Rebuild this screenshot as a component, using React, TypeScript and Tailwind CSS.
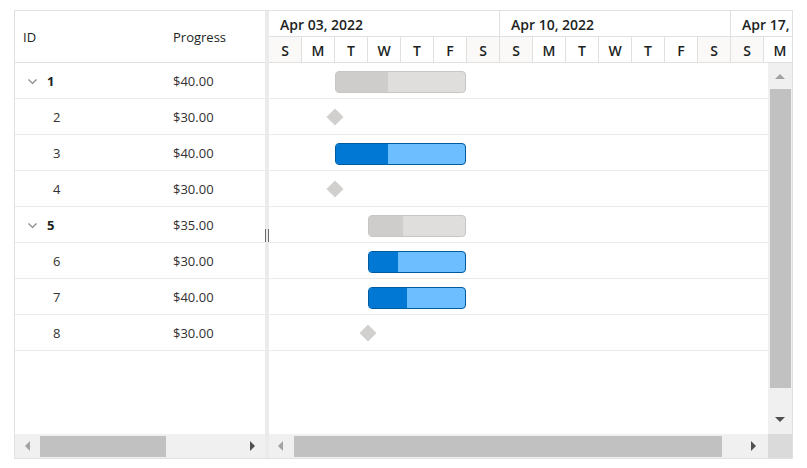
import React from "react";

type Row = {
  id: number;
  progress: string;
  parent?: boolean;
  kind: "parent" | "task" | "milestone";
  start: number; // day index from Apr 03
  days?: number;
  pct?: number;
};

const rows: Row[] = [
  { id: 1, progress: "$40.00", parent: true, kind: "parent", start: 2, days: 4, pct: 40 },
  { id: 2, progress: "$30.00", kind: "milestone", start: 2 },
  { id: 3, progress: "$40.00", kind: "task", start: 2, days: 4, pct: 40 },
  { id: 4, progress: "$30.00", kind: "milestone", start: 2 },
  { id: 5, progress: "$35.00", parent: true, kind: "parent", start: 3, days: 3, pct: 35 },
  { id: 6, progress: "$30.00", kind: "task", start: 3, days: 3, pct: 30 },
  { id: 7, progress: "$40.00", kind: "task", start: 3, days: 3, pct: 40 },
  { id: 8, progress: "$30.00", kind: "milestone", start: 3 },
];

const DAY = 33;
const weeks = ["Apr 03, 2022", "Apr 10, 2022", "Apr 17, 2022"];
const dayLetters = ["S", "M", "T", "W", "T", "F", "S"];

const ArrowLeft = ({ dark }: { dark?: boolean }) => (
  <svg width="6" height="10" viewBox="0 0 6 10">
    <polygon points="5,0 5,10 0,5" fill={dark ? "#505050" : "#a3a3a3"} />
  </svg>
);
const ArrowRight = ({ dark }: { dark?: boolean }) => (
  <svg width="6" height="10" viewBox="0 0 6 10">
    <polygon points="0,0 0,10 5,5" fill={dark ? "#505050" : "#a3a3a3"} />
  </svg>
);
const ArrowUp = ({ dark }: { dark?: boolean }) => (
  <svg width="10" height="6" viewBox="0 0 10 6">
    <polygon points="0,5 10,5 5,0" fill={dark ? "#505050" : "#a3a3a3"} />
  </svg>
);
const ArrowDown = ({ dark }: { dark?: boolean }) => (
  <svg width="10" height="6" viewBox="0 0 10 6">
    <polygon points="0,0 10,0 5,5" fill={dark ? "#505050" : "#a3a3a3"} />
  </svg>
);

const Chevron = () => (
  <svg width="9" height="6" viewBox="0 0 9 6" className="mr-[10px]">
    <polyline points="0.5,0.5 4.5,4.5 8.5,0.5" fill="none" stroke="#8a8886" strokeWidth="1.2" />
  </svg>
);

const Bar = ({ row }: { row: Row }) => {
  if (row.kind === "milestone") {
    return (
      <div
        className="mt-[12px] h-[12px] w-[12px] rotate-45 bg-[#d2d0ce]"
        style={{ marginLeft: row.start * DAY - 6 }}
      />
    );
  }
  const width = (row.days ?? 0) * DAY - 1;
  const isParent = row.kind === "parent";
  return (
    <div
      className={
        "mt-[8px] h-[22px] overflow-hidden rounded-[4px] border " +
        (isParent ? "border-[#c8c6c4] bg-[#dfdedd]" : "border-[#005a9e] bg-[#6cbeff]")
      }
      style={{ marginLeft: row.start * DAY, width }}
    >
      <div
        className={"h-full " + (isParent ? "bg-[#cecdcc]" : "bg-[#0078d4]")}
        style={{ width: `${row.pct}%` }}
      />
    </div>
  );
};

export default function App() {
  return (
    <div
      className="pl-[14px] pt-[10px] text-[#323130]"
      style={{ fontFamily: '"Open Sans", "Noto Sans", sans-serif' }}
    >
      <div className="flex h-[449px] w-[779px] border border-[#e0e0e0] bg-white">
        {/* Left grid */}
        <div className="flex w-[250px] flex-col">
          <div className="flex h-[52px] items-center border-b border-[#e0e0e0] pt-[2px] text-[13px] text-[#201f1e]">
            <div className="w-[158px] pl-[8px]">ID</div>
            <div>Progress</div>
          </div>
          <div className="flex-1 overflow-hidden">
            {rows.map((r) => (
              <div key={r.id} className="flex h-[36px] items-center border-b border-[#e9e9e9] pt-[3px] text-[13px]">
                <div className="flex w-[158px] items-center">
                  {r.parent ? (
                    <div className="flex items-center pl-[13px]">
                      <Chevron />
                      <span className="font-bold text-[#201f1e]">{r.id}</span>
                    </div>
                  ) : (
                    <span className="pl-[38px]">{r.id}</span>
                  )}
                </div>
                <div>{r.progress}</div>
              </div>
            ))}
          </div>
          <div className="flex h-[24px] items-center bg-[#f0f0f0] pl-[10px] pr-[9px]">
            <ArrowLeft />
            <div className="ml-[9px] h-[21px] w-[126px] bg-[#c1c1c1]" />
            <div className="flex-1" />
            <ArrowRight dark />
          </div>
        </div>

        {/* Splitter */}
        <div className="relative w-[4px] bg-[#ebebeb]">
          <div className="absolute left-0 top-[218px] flex h-[13px] w-[4px] justify-between">
            <div className="w-[1px] bg-[#6b6b6b]" />
            <div className="w-[1px] bg-[#6b6b6b]" />
          </div>
        </div>

        {/* Chart */}
        <div className="flex min-w-0 flex-1 flex-col">
          <div className="h-[52px] overflow-hidden border-b border-[#e0e0e0]">
            <div className="flex h-[26px] w-[693px] border-b border-[#e0e0e0]">
              {weeks.map((w) => (
                <div
                  key={w}
                  className="flex w-[231px] shrink-0 items-center border-r border-[#e0e0e0] pl-[11px] pt-[1px] text-[14px] font-semibold text-[#201f1e]"
                >
                  {w}
                </div>
              ))}
            </div>
            <div className="flex h-[25px] w-[693px]">
              {weeks.flatMap((w) =>
                dayLetters.map((d, i) => (
                  <div
                    key={w + i}
                    className={
                      "flex w-[33px] shrink-0 items-center justify-center border-r border-[#e0e0e0] pt-[1px] text-[14px] font-semibold text-[#201f1e] " +
                      (i === 0 || i === 6 ? "bg-[#faf9f8]" : "bg-white")
                    }
                  >
                    {d}
                  </div>
                ))
              )}
            </div>
          </div>
          <div className="flex flex-1 overflow-hidden">
            <div className="min-w-0 flex-1 overflow-hidden">
              {rows.map((r) => (
                <div key={r.id} className="flex h-[36px] items-start border-b border-[#e9e9e9]">
                  <Bar row={r} />
                </div>
              ))}
            </div>
            <div className="flex w-[24px] flex-col items-center bg-[#f0f0f0]">
              <div className="mt-[11px]">
                <ArrowUp />
              </div>
              <div className="mt-[9px] h-[299px] w-[21px] bg-[#c1c1c1]" />
              <div className="flex-1" />
              <div className="mb-[11px]">
                <ArrowDown dark />
              </div>
            </div>
          </div>
          <div className="flex h-[24px]">
            <div className="flex flex-1 items-center bg-[#f0f0f0] pl-[9px] pr-[11px]">
              <ArrowLeft />
              <div className="ml-[10px] h-[21px] w-[428px] bg-[#c1c1c1]" />
              <div className="flex-1" />
              <ArrowRight dark />
            </div>
            <div className="w-[24px] bg-[#dadada]" />
          </div>
        </div>
      </div>
    </div>
  );
}
